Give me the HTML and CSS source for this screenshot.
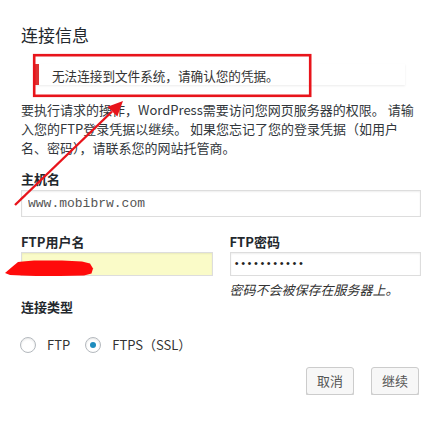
FILE: index.html
```html
<!DOCTYPE html>
<html lang="zh-CN">
<head>
    <meta charset="UTF-8">
    <meta name="viewport" content="width=device-width, initial-scale=1.0">
    <title>连接信息</title>
    <link rel="stylesheet" href="styles.css">
</head>
<body>
    <form class="dialog" id="requestFilesystemForm">
        <h2 class="title">连接信息</h2>

        <div class="notice notice-error">
            <p>无法连接到文件系统，请确认您的凭据。</p>
        </div>

        <p class="intro">要执行请求的操作，WordPress需要访问您网页服务器的权限。 请输入您的FTP登录凭据以继续。 如果您忘记了您的登录凭据（如用户<br>名、密码），请联系您的网站托管商。</p>

        <div class="field">
            <label for="hostname">主机名</label>
            <input type="text" id="hostname" class="input input-wide mono" value="www.mobibrw.com">
        </div>

        <div class="field-row">
            <div class="field">
                <label for="username">FTP用户名</label>
                <input type="text" id="username" class="input input-autofill" value="">
            </div>
            <div class="field">
                <label for="password">FTP密码</label>
                <input type="password" id="password" class="input input-password" value="12345678901">
                <em class="hint">密码不会被保存在服务器上。</em>
            </div>
        </div>

        <fieldset class="conn-type">
            <legend>连接类型</legend>
            <div class="radios">
                <label class="radio"><input type="radio" name="connection_type" value="ftp"> FTP</label>
                <label class="radio"><input type="radio" name="connection_type" value="ftps" checked> FTPS（SSL）</label>
            </div>
        </fieldset>

        <div class="actions">
            <button type="button" class="button">取消</button>
            <button type="submit" class="button">继续</button>
        </div>
    </form>

    <!-- annotation marks drawn over the screenshot -->
    <svg class="marks" width="438" height="422" viewBox="0 0 438 422">
        <rect x="34.2" y="55.2" width="276" height="40.6" fill="none" stroke="#e8141b" stroke-width="2.6"/>
        <line x1="15" y1="205" x2="112" y2="111.5" stroke="#e8141b" stroke-width="2.4"/>
        <polygon points="123,101 107.5,106.7 117.3,116.5" fill="#e8141b"/>
        <path d="M5,273 L12,267 L18,262 L34,260.5 L62,260.5 L82,261.5 L90,263.5 L93,268.5 L91.5,273.5 L84,275.5 L60,276 L36,276 L22,275.5 L10,275 Z" fill="#ff0b0b"/>
    </svg>
</body>
</html>
```

FILE: styles.css
```css
body {
    margin: 0;
    background: #fff;
    font-family: "Noto Sans CJK SC", "Liberation Sans", sans-serif;
    font-size: 13px;
    line-height: 19px;
    color: #333;
}
.dialog {
    padding: 25px 17px 0 21px;
}
.title {
    margin: 0 0 19px;
    font-size: 17px;
    line-height: 20px;
    font-weight: normal;
    color: #23282d;
}
.notice {
    margin: 0 16px 0 14px;
    padding: 2px 12px 0 13px;
    height: 19px;
    background: #fff;
    border-left: 4px solid #dc3232;
    box-shadow: 0 1px 2px rgba(0, 0, 0, .08);
}
.notice p {
    margin: 0;
    font-size: 12.6px;
    color: #333;
}
.intro {
    margin: 15px 0 12px;
    color: #32373c;
}
.field label,
.conn-type legend {
    display: block;
    font-weight: bold;
    color: #23282d;
}
.field label {
    margin-bottom: 2px;
}
.input {
    display: block;
    box-sizing: border-box;
    width: 100%;
    height: 24px;
    margin: 0;
    padding: 0 6px;
    border: 1px solid #ddd;
    box-shadow: inset 0 1px 2px rgba(0, 0, 0, .07);
    background: #fff;
    color: #555;
    font-size: 13px;
    outline: none;
}
.input-wide {
    height: 27px;
}
.mono {
    font-family: "Liberation Mono", monospace;
}
.input-autofill {
    background: #fafbc8;
}
.input-password {
    padding-left: 3px;
    font-family: "Liberation Mono", monospace;
    font-size: 10.7px;
    color: #222;
}
.field-row {
    display: grid;
    grid-template-columns: 1fr 1fr;
    column-gap: 17px;
    margin-top: 15px;
}
.field-row label {
    margin-bottom: 1px;
}
.hint {
    display: block;
    margin-top: 6px;
    line-height: 15px;
    color: #333;
}
.conn-type {
    margin: 0;
    padding: 0;
    border: none;
}
.conn-type legend {
    padding: 0;
    line-height: 19px;
}
.radios {
    display: flex;
    gap: 16px;
    margin-top: 19px;
}
.radio {
    display: flex;
    align-items: center;
    gap: 11px;
    color: #333;
}
.radio input {
    appearance: none;
    -webkit-appearance: none;
    box-sizing: border-box;
    width: 16px;
    height: 16px;
    margin: 0 0 0 -1px;
    border: 1px solid #b4b9be;
    border-radius: 50%;
    background: #fff;
    box-shadow: inset 0 1px 2px rgba(0, 0, 0, .1);
    display: flex;
    align-items: center;
    justify-content: center;
}
.radio input:checked::before {
    content: "";
    width: 6px;
    height: 6px;
    border-radius: 50%;
    background: #1e8cbe;
}
.actions {
    display: flex;
    justify-content: flex-end;
    gap: 17px;
    margin-top: 13px;
    padding-right: 2px;
}
.button {
    height: 28px;
    padding: 0 10px 1px;
    border: 1px solid #ccc;
    border-radius: 3px;
    background: #f7f7f7;
    box-shadow: 0 1px 0 #ccc;
    color: #555;
    font-family: inherit;
    font-size: 13px;
    cursor: pointer;
}
.button:hover {
    background: #fafafa;
    border-color: #999;
}
.marks {
    position: absolute;
    top: 0;
    left: 0;
    pointer-events: none;
}
```
